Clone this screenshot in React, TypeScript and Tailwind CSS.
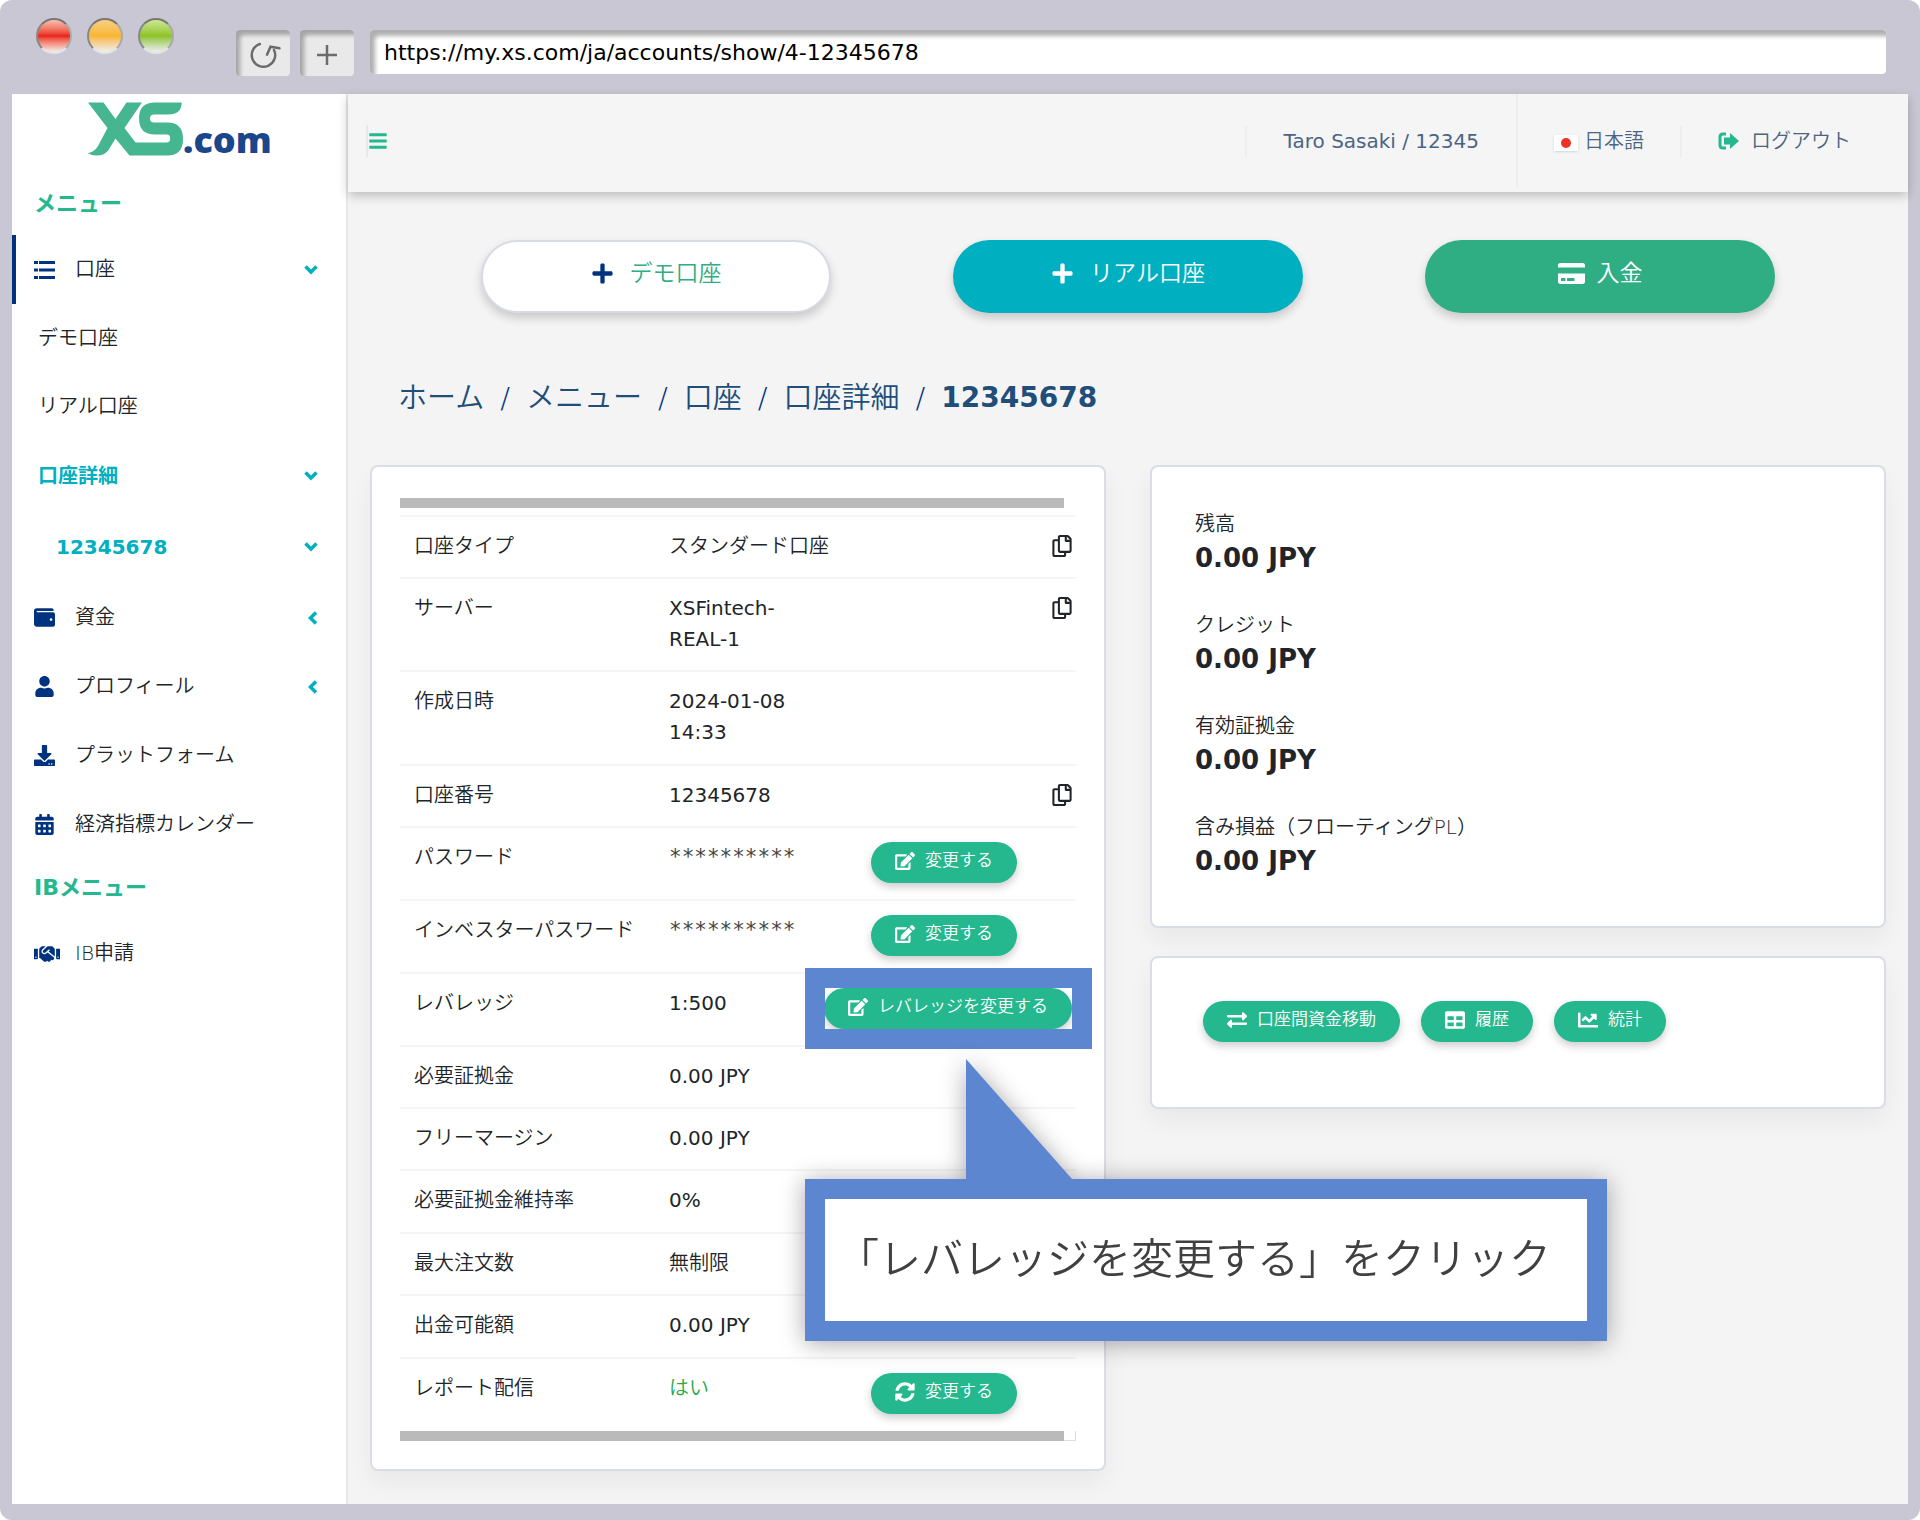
import React from 'react';
import { FaBars, FaCalendarAlt, FaChartLine, FaCreditCard, FaDownload, FaEdit, FaExchangeAlt, FaHandshake, FaPlus, FaRegCopy, FaSyncAlt, FaTable, FaUser, FaWallet } from 'react-icons/fa';

type Icon = React.ComponentType<{ className?: string }>;

interface Row {
    label: string;
    value: string;
    height: string;
    copy?: boolean;
    action?: string;
    icon?: Icon;
    highlight?: boolean;
    valueClass?: string;
}

const latin = 'font-normal';
const secret = "text-[21px] font-normal text-[#444] [font-family:'DejaVu_Sans_Mono',monospace]";

const rows: Row[] = [
    { label: '口座タイプ', value: 'スタンダード口座', copy: true, height: 'h-[62px]' },
    { label: 'サーバー', value: 'XSFintech-REAL-1', copy: true, height: 'h-[93px]', valueClass: latin },
    { label: '作成日時', value: '2024-01-08 14:33', height: 'h-[94px]', valueClass: latin },
    { label: '口座番号', value: '12345678', copy: true, height: 'h-[62px]', valueClass: latin },
    { label: 'パスワード', value: '**********', action: '変更する', icon: FaEdit, height: 'h-[73px]', valueClass: secret },
    { label: 'インベスターパスワード', value: '**********', action: '変更する', icon: FaEdit, height: 'h-[73px]', valueClass: secret },
    { label: 'レバレッジ', value: '1:500', action: 'レバレッジを変更する', icon: FaEdit, height: 'h-[73px]', highlight: true, valueClass: latin },
    { label: '必要証拠金', value: '0.00 JPY', height: 'h-[62px]', valueClass: latin },
    { label: 'フリーマージン', value: '0.00 JPY', height: 'h-[62px]', valueClass: latin },
    { label: '必要証拠金維持率', value: '0%', height: 'h-[63px]', valueClass: latin },
    { label: '最大注文数', value: '無制限', height: 'h-[62px]' },
    { label: '出金可能額', value: '0.00 JPY', height: 'h-[63px]', valueClass: latin },
    { label: 'レポート配信', value: 'はい', action: '変更する', icon: FaSyncAlt, height: 'h-[73px]', valueClass: 'text-[#28a745]' },
];

const balances = [
    { label: '残高', value: '0.00 JPY' },
    { label: 'クレジット', value: '0.00 JPY' },
    { label: '有効証拠金', value: '0.00 JPY' },
    { label: '含み損益（フローティングPL）', value: '0.00 JPY' },
];

const crumbs = ['ホーム', 'メニュー', '口座', '口座詳細'];

const Logo = () => (
    <a href="#" aria-label="XS.com" className="flex h-[62px] items-start pl-[76px] pt-2">
        <svg width="95" height="54" viewBox="0 0 95 54" fill="#45b690">
            <path d="M0 0.500H15.500L27.500 17L38.500 0.500H54L36.500 26L47.500 40.500H78.500Q82 40.500 82 37.500V35.500Q82 32.500 78.500 32.500H67Q51 32.500 51 16.500Q51 0.500 67 0.500H93.700Q93.500 12.500 80.500 12.500H66Q62 12.500 62 16.500Q62 20.500 66 20.500H79.500Q95 20.500 95 37Q95 53.500 79.500 53.500H41.500L27.500 36.500L20.500 48Q17 53.500 8.500 53.500Q3 53.500 0 51Q6.500 50 10 44L19.500 26Z" />
        </svg>
        <span className="mt-3.5 text-[36px] font-extrabold leading-[48px] text-[#1b468c] [font-family:'Open_Sans',sans-serif]">.com</span>
    </a>
);

const ReloadIcon = () => (
    <svg width="36" height="34" viewBox="0 0 36 34" fill="none" stroke="#6b6b6b" strokeWidth="2.500" strokeLinecap="round">
        <path d="M14.800 8A11.700 11.700 0 1 0 29 14" />
        <path d="M22 18.700L25.500 10.700L34.500 12.300" />
    </svg>
);

const ListIcon: Icon = () => (
    <svg width="21" height="20" viewBox="0 0 21 20" fill="currentColor">
        <path d="M0 1H4V4H0ZM5 1H21V4H5ZM0 8.500H4V11.500H0ZM5 8.500H21V11.500H5ZM0 16H4V19H0ZM5 16H21V19H5Z" />
    </svg>
);

const ChevronDown: Icon = ({ className }) => (
    <svg className={className} width="14" height="10" viewBox="0 0 14 10" fill="none" stroke="currentColor" strokeWidth="3.500"><path d="M1.500 1.500L7 7L12.500 1.500" /></svg>
);

const ChevronLeft: Icon = ({ className }) => (
    <svg className={className} width="10" height="14" viewBox="0 0 10 14" fill="none" stroke="currentColor" strokeWidth="3.500"><path d="M8 1.500L2.500 7L8 12.500" /></svg>
);

const LogoutIcon = () => (
    <svg width="21" height="18" viewBox="0 0 21 18">
        <path d="M8 2H5Q2 2 2 5V13Q2 16 5 16H8" fill="none" stroke="#25b88f" strokeWidth="3" />
        <path d="M6 5.500H12V1L21 9L12 17V12.500H6Z" fill="#25b88f" />
    </svg>
);

const Light: React.FC<{ className: string }> = ({ className }) => (
    <span className={`h-9 w-9 rounded-full border-2 border-t-[#777] border-l-[#888] border-r-[#aaa] border-b-[#e4e4e4] ${className}`} />
);

const NavItem: React.FC<{ icon: Icon; label: string; arrow?: Icon; active?: boolean; iconSize?: string }> = ({ icon: I, label, arrow: Arrow, active, iconSize = 'text-[21px]' }) => (
    <a href="#" className={`flex h-[69px] items-center border-l-4 pl-[18px] pr-7 ${active ? 'border-[#00337f]' : 'border-transparent'}`}>
        <span className={`flex w-[41px] text-[#00337f] ${iconSize}`}><I /></span>
        <span className="flex-1">{label}</span>
        {Arrow && <Arrow className="text-[#00afc0]" />}
    </a>
);

const GreenButton: React.FC<{ icon: Icon; label: string }> = ({ icon: I, label }) => (
    <button className="flex h-[41px] items-center gap-2.5 whitespace-nowrap rounded-full bg-[#25b88f] px-6 pb-1 text-[17px] text-white shadow-[0_4px_8px_rgba(0,0,0,0.2)]">
        <I className="text-[20px]" />
        {label}
    </button>
);

const Callout = () => (
    <>
        <div className="pointer-events-none absolute -right-4 -top-[6px] h-[81px] w-[287px] border-[20px] border-[#5d86d0]" />
        <div className="absolute left-[5px] top-[85px] z-10 drop-shadow-[0_2px_12px_rgba(0,0,0,0.35)]">
            <svg className="ml-[161px] block" width="106" height="120" viewBox="0 0 106 120" fill="#5d86d0">
                <path d="M0 0L106 120H0Z" />
            </svg>
            <p className="whitespace-nowrap border-[20px] border-[#5d86d0] bg-white py-8 pl-3 pr-9 text-[42px] leading-[58px] text-[#404040]">
                「レバレッジを変更する」をクリック
            </p>
        </div>
    </>
);

const AccountRow: React.FC<{ row: Row }> = ({ row }) => (
    <tr className={`border-t-2 border-[#f5f5f6] align-top ${row.height}`}>
        <th scope="row" className="w-[255px] whitespace-nowrap pl-3.5 pt-3.5 text-left font-[350]">{row.label}</th>
        <td className={`w-[145px] pl-3.5 pt-3.5 ${row.valueClass ?? ''}`}>
            <span className={row.value.length > 12 ? 'block' : 'whitespace-nowrap'}>{row.value}</span>
        </td>
        <td>
            {row.copy && (
                <button aria-label="コピー" className="ml-auto mr-[3px] mt-[18px] block text-[22px]"><FaRegCopy /></button>
            )}
            {row.action && row.icon && (
                <div className={row.highlight ? 'relative flex justify-end pr-1 pt-3.5' : 'pl-[71px] pt-3.5'}>
                    <GreenButton icon={row.icon} label={row.action} />
                    {row.highlight && <Callout />}
                </div>
            )}
        </td>
    </tr>
);

const Sidebar = () => (
    <aside className="w-[336px] shrink-0 border-r-2 border-[#e8e8e8] bg-white">
        <Logo />
        <h2 className="mt-[31px] pl-[22px] text-[22px] font-bold leading-[34px] text-[#25b88f]">メニュー</h2>
        <nav className="mt-3.5">
            <NavItem icon={ListIcon} label="口座" arrow={ChevronDown} active />
            <a href="#" className="flex h-[68px] items-center pl-[26px]">デモ口座</a>
            <a href="#" className="flex h-[69px] items-center pl-[26px]">リアル口座</a>
            <a href="#" className="flex h-[70px] items-center justify-between pl-[26px] pr-7 font-bold text-[#00afc0]">口座詳細<ChevronDown /></a>
            <a href="#" className="flex h-[72px] items-center justify-between pl-11 pr-7 font-bold text-[#00afc0]">12345678<ChevronDown /></a>
            <NavItem icon={FaWallet} label="資金" arrow={ChevronLeft} />
            <NavItem icon={FaUser} label="プロフィール" arrow={ChevronLeft} />
            <NavItem icon={FaDownload} label="プラットフォーム" />
            <NavItem icon={FaCalendarAlt} label="経済指標カレンダー" />
        </nav>
        <h2 className="mt-3 pl-[22px] text-[22px] font-bold leading-[34px] text-[#25b88f]">IBメニュー</h2>
        <nav className="mt-3.5">
            <NavItem icon={FaHandshake} label="IB申請" iconSize="text-[26px]" />
        </nav>
    </aside>
);

const TopBar = () => (
    <header className="flex h-[98px] items-center bg-[#f5f5f5] pb-1 text-[#4a6583] shadow-[0_4px_10px_rgba(0,0,0,0.22)]">
        <button aria-label="メニュー" className="ml-[18px] border-l-2 border-[#e8e8e8] py-1.5 text-[20px] text-[#25b88f]"><FaBars /></button>
        <span className="ml-auto border-l-2 border-[#eeeeee] px-[37px] font-normal">Taro Sasaki / 12345</span>
        <a href="#" className="flex h-full items-center gap-1.5 border-l-2 border-[#eeeeee] pl-9 pr-9">
            <span className="mt-1 flex h-4 w-6 items-center justify-center bg-white shadow-sm"><span className="h-2.5 w-2.5 rounded-full bg-[#ee3124]" /></span>
            日本語
        </a>
        <a href="#" className="flex items-center gap-3 border-l-2 border-[#eeeeee] pl-9 pr-[57px]"><LogoutIcon />ログアウト</a>
    </header>
);

const App: React.FC = () => {
    return (
        <div className="min-h-screen bg-white text-[20px] font-[350] leading-[31px] text-[#212529] [font-family:'DejaVu_Sans','Noto_Sans_CJK_JP',sans-serif]">
            <div className="flex min-h-screen flex-col rounded-xl bg-[#c8c7d3] px-3 pb-4">
                <div className="flex h-[94px] items-start">
                    <div className="flex gap-[15px] pl-6 pt-[18px]">
                        <Light className="bg-linear-to-b from-[#f6c0b0] via-[#e71f19] to-[#eee]" />
                        <Light className="bg-linear-to-b from-[#f8cf80] via-[#f8b62d] to-[#eee]" />
                        <Light className="bg-linear-to-b from-[#cfe890] via-[#8fc31f] to-[#eee]" />
                    </div>
                    <div className="ml-[62px] mt-[30px] flex gap-2.5">
                        <button aria-label="再読み込み" className="flex h-[46px] w-[54px] items-center justify-center rounded bg-[#e9e9e9] shadow-[inset_4px_5px_4px_#a4a4a4]"><ReloadIcon /></button>
                        <button aria-label="新しいタブ" className="flex h-[46px] w-[54px] items-center justify-center rounded bg-[#e9e9e9] pt-1 text-[#6b6b6b] shadow-[inset_4px_5px_4px_#a4a4a4]">
                            <svg width="22" height="22" viewBox="0 0 22 22" stroke="currentColor" strokeWidth="2.500"><path d="M11 1V21M1 11H21" /></svg>
                        </button>
                    </div>
                    <input aria-label="URL" defaultValue="https://my.xs.com/ja/accounts/show/4-12345678" className="ml-4 mr-[22px] mt-[30px] h-[44px] flex-1 rounded bg-white pl-3.5 text-[22px] font-normal text-black shadow-[inset_5px_6px_4px_#b0b0b0]" />
                </div>

                <div className="flex flex-1 bg-[#f4f4f4]">
                    <Sidebar />
                    <div className="min-w-0 flex-1">
                        <TopBar />
                        <main className="px-[22px]">
                            <div className="mt-12 flex justify-between px-[111px] text-[23px]">
                                <button className="flex h-[73px] w-[350px] items-center justify-center gap-4 rounded-full border-2 border-[#d8dae5] bg-white pb-1.5 text-[#2fae84] shadow-[0_5px_10px_rgba(0,0,0,0.18)]"><FaPlus className="text-[#00337f]" />デモ口座</button>
                                <button className="flex h-[73px] w-[350px] items-center justify-center gap-4 rounded-full bg-[#00afc0] pb-1.5 text-white shadow-[0_5px_10px_rgba(0,0,0,0.18)]"><FaPlus />リアル口座</button>
                                <button className="flex h-[73px] w-[350px] items-center justify-center gap-3 rounded-full bg-[#2fae84] pb-1.5 text-white shadow-[0_5px_10px_rgba(0,0,0,0.18)]"><FaCreditCard className="text-[27px]" />入金</button>
                            </div>

                            <nav className="mt-[62px] flex gap-4 pl-7 text-[29px] leading-[46px] text-[#204e79]">
                                {crumbs.map((c) => (
                                    <React.Fragment key={c}>
                                        <a href="#">{c}</a>
                                        <span className="text-[#00337f]">/</span>
                                    </React.Fragment>
                                ))}
                                <span className="text-[28px] font-bold">12345678</span>
                            </nav>

                            <div className="mt-[44px] grid grid-cols-2 items-start gap-11">
                                <section className="rounded-lg border-2 border-[#dadce6] bg-white px-7 pb-7 pt-[31px] shadow-[0_12px_24px_rgba(0,0,0,0.05)]">
                                    <div className="mb-[7px] mr-3 h-[10px] bg-[#bababa]" />
                                    <table className="w-full table-fixed">
                                        <tbody>
                                            {rows.map((row) => <AccountRow key={row.label} row={row} />)}
                                        </tbody>
                                    </table>
                                    <div className="flex h-[10px]">
                                        <div className="flex-1 bg-[#bababa]" />
                                        <div className="w-3 border-b border-r border-[#dddddd]" />
                                    </div>
                                </section>

                                <div className="flex flex-col gap-7">
                                    <section className="h-[463px] rounded-lg border-2 border-[#dadce6] bg-white px-[43px] pt-[41px] shadow-[0_12px_24px_rgba(0,0,0,0.05)]">
                                        <dl>
                                            {balances.map((b) => (
                                                <div key={b.label} className="h-[101px]">
                                                    <dt className="leading-[32px]">{b.label}</dt>
                                                    <dd className="text-[26px] font-bold leading-[36px]">{b.value}</dd>
                                                </div>
                                            ))}
                                        </dl>
                                    </section>
                                    <section className="flex h-[153px] gap-[21px] rounded-lg border-2 border-[#dadce6] bg-white pl-[51px] pt-[43px] shadow-[0_12px_24px_rgba(0,0,0,0.05)]">
                                        <GreenButton icon={FaExchangeAlt} label="口座間資金移動" />
                                        <GreenButton icon={FaTable} label="履歴" />
                                        <GreenButton icon={FaChartLine} label="統計" />
                                    </section>
                                </div>
                            </div>
                        </main>
                    </div>
                </div>
            </div>
        </div>
    );
};

export default App;
